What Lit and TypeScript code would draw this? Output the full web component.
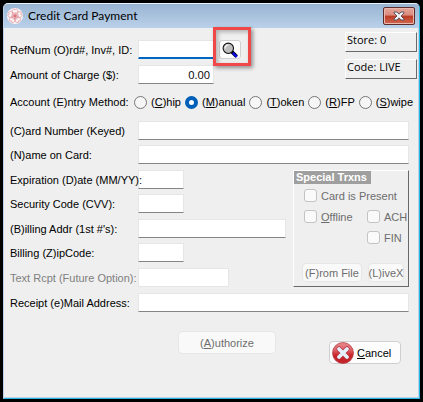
import { LitElement, html, css, svg } from "lit";
import { customElement, state } from "lit/decorators.js";

interface Method {
  id: string;
  key: string;
  rest: string;
}

const METHODS: Method[] = [
  { id: "chip", key: "C", rest: "hip" },
  { id: "manual", key: "M", rest: "anual" },
  { id: "token", key: "T", rest: "oken" },
  { id: "rfp", key: "R", rest: "FP" },
  { id: "swipe", key: "S", rest: "wipe" },
];

const blossom = html`<svg class="logo" viewBox="0 0 16 16" aria-hidden="true">
  <circle cx="8" cy="8" r="8" fill="#fbf3f4" />
  <g fill="none" stroke="#de8f96" stroke-width="0.6">
    ${[0, 72, 144, 216, 288].map(
      (a) => svg`<g transform="rotate(${a} 8 8)">
        <path d="M8 8C4.2 5.8 4.4 1.8 6.8 0.8L8 2L9.2 0.8C11.6 1.8 11.8 5.8 8 8Z" />
        <path d="M8 8V4M8 8L6.6 4.4M8 8L9.4 4.4" />
      </g>`
    )}
  </g>
  <circle cx="8" cy="8" r="0.8" fill="#d8525c" />
</svg>`;

const closeMark = html`<svg class="close-mark" viewBox="0 0 12 10" aria-hidden="true">
  <path
    d="M1 1H4L6 3.2L8 1H11V2L8 5L11 8V9H8L6 6.8L4 9H1V8L4 5L1 2Z"
    fill="#f4f4f6"
    stroke="#5b5560"
    stroke-width="1"
  />
</svg>`;

const magnifier = html`<svg class="magnifier" viewBox="0 0 16 16" aria-hidden="true">
  <path d="M9.6 9.6L14.6 14.6" stroke="#000" stroke-width="3.6" />
  <path d="M10.8 10.8L14.8 14.8" stroke="#0a0ae0" stroke-width="2.6" />
  <circle cx="6.3" cy="6.3" r="5.2" fill="#bdbdbd" stroke="#111" stroke-width="1.1" />
  <path d="M3 6.4A3.4 3.4 0 0 1 6.4 3" fill="none" stroke="#eee" stroke-width="1.3" />
</svg>`;

const cancelMark = html`<svg class="cancel-mark" viewBox="0 0 22 22" aria-hidden="true">
  <defs>
    <linearGradient id="red" x1="0" y1="0" x2="0" y2="1">
      <stop offset="0" stop-color="#e88a8e" />
      <stop offset="0.4" stop-color="#dc5a60" />
      <stop offset="0.6" stop-color="#c9242c" />
      <stop offset="1" stop-color="#c4222a" />
    </linearGradient>
  </defs>
  <circle cx="11" cy="11" r="10.5" fill="url(#red)" stroke="#b8484e" stroke-width="0.8" />
  <path d="M7 7L15 15M15 7L7 15" stroke="#b0303a" stroke-width="5" stroke-linecap="round" />
  <path d="M7 7L15 15M15 7L7 15" stroke="#e6f0fc" stroke-width="3.8" stroke-linecap="round" />
</svg>`;

@customElement("app-root")
export class AppRoot extends LitElement {
  @state() private method = "manual";

  static styles = css`
    :host {
      display: block;
      box-sizing: border-box;
      min-height: 100vh;
      padding: 3px;
      background: #000;
      color: #000;
      font: 11px/16px "Liberation Sans", Arial, sans-serif;
    }
    * {
      box-sizing: border-box;
    }
    .window {
      display: flex;
      flex-direction: column;
      min-height: calc(100vh - 6px);
      border: 1px solid #29b6dc;
      border-left-color: #b9d1ea;
      border-top-color: #e8f0f8;
      border-radius: 5px 5px 0 0;
      background: #efefef;
      overflow: hidden;
    }
    .titlebar {
      display: flex;
      align-items: center;
      gap: 5px;
      height: 24px;
      padding: 0 4px 0 3px;
      background: linear-gradient(#98b4d2, #bad1ea);
    }
    .logo {
      width: 16px;
      height: 16px;
    }
    .title {
      flex: 1;
      margin: 0;
      font: 12px/16px Lato, sans-serif;
    }
    .close {
      display: flex;
      align-items: center;
      justify-content: center;
      width: 32px;
      height: 18px;
      padding: 0;
      border: 1px solid #5e2b2b;
      border-radius: 2px;
      background: linear-gradient(#e6a79b, #d98a7c 45%, #bb3a24 50%, #d0674f);
      box-shadow: inset 0 0 0 1px #e9b9b0;
    }
    .close-mark {
      width: 12px;
      height: 10px;
    }
    .body {
      flex: 1;
      padding: 4px 1px 16px 6px;
      border-right: 1px solid #b9d1ea;
      border-bottom: 1px solid #b9d1ea;
    }
    .top,
    .pair {
      display: flex;
      flex-direction: column;
      gap: 5px;
    }
    .head {
      display: flex;
      justify-content: space-between;
    }
    .top {
      gap: 6px;
      padding-top: 8px;
    }
    .row {
      display: grid;
      grid-template-columns: 128px 1fr;
      align-items: center;
      height: 19px;
      white-space: nowrap;
    }
    .row label {
      z-index: 1;
    }
    .row.off {
      color: #808080;
    }
    .field {
      width: 100%;
      height: 19px;
      padding: 0 4px;
      border: 1px solid #e6e6e6;
      border-bottom-color: #858585;
      border-radius: 0;
      background: #fff;
      font: inherit;
      outline: none;
    }
    .field:disabled {
      border-color: #e6e6e6;
    }
    .active {
      border-bottom: 2px solid #0067c0;
    }
    .amount {
      padding: 0 3px;
      text-align: right;
      font: 11px/16px "Open Sans", sans-serif;
    }
    .w-short {
      width: 46px;
    }
    .w-ref {
      width: 76px;
    }
    .w-text {
      width: 91px;
    }
    .w-addr {
      width: 148px;
    }
    .lookup {
      display: flex;
      align-items: center;
      gap: 5px;
    }
    .find-box {
      position: relative;
    }
    .find-box::after {
      content: "";
      position: absolute;
      inset: -13px -10px -7px -6px;
      border: 3px solid #f04848;
      box-shadow: 2px 2px 4px #0006, inset 2px 2px 4px #0004;
      pointer-events: none;
    }
    .find {
      display: flex;
      align-items: center;
      justify-content: center;
      width: 22px;
      height: 19px;
      padding: 0;
      border: 1px solid #d0d0d0;
      border-radius: 3px;
      background: #fdfdfd;
    }
    .magnifier {
      width: 16px;
      height: 16px;
    }
    .tags {
      display: flex;
      flex-direction: column;
      gap: 7px;
      width: 72px;
    }
    .tag {
      height: 20px;
      padding: 0 1px;
      border: 1px solid #fff;
      border-right-color: #696969;
      border-bottom-color: #696969;
      font: 11px/14px "Open Sans", sans-serif;
    }
    .methods {
      display: flex;
      align-items: center;
      gap: 4px;
      margin: 9px 0 10px;
      height: 18px;
      white-space: nowrap;
    }
    .caption {
      width: 120px;
    }
    .choice {
      display: flex;
      align-items: center;
      gap: 4px;
    }
    input[type="radio"],
    input[type="checkbox"] {
      appearance: none;
      flex: none;
      width: 13px;
      height: 13px;
      margin: 0;
      border: 1px solid #767676;
      border-radius: 50%;
      background: #f6f6f6;
    }
    input[type="radio"]:checked {
      border: 4px solid #005fb8;
      background: #fff;
    }
    input[type="checkbox"] {
      border-color: #c3c3c3;
      border-radius: 3px;
      background: #fafafa;
    }
    .form {
      display: flex;
      flex-direction: column;
      gap: 6px;
      padding-right: 8px;
    }
    .middle {
      display: flex;
      justify-content: space-between;
    }
    .left {
      display: flex;
      flex-direction: column;
      gap: 6px;
    }
    .special {
      display: flex;
      flex-direction: column;
      width: 116px;
      border: 1px solid #fff;
      border-right-color: #696969;
      border-bottom-color: #696969;
      color: #6d6d6d;
    }
    .special-title {
      align-self: flex-start;
      margin: 0;
      padding: 0 4px 0 2px;
      background: #9f9f9f;
      color: #fff;
      font: bold 11px/13px "Liberation Sans", Arial, sans-serif;
    }
    .checks {
      display: grid;
      grid-template-columns: 63px 1fr;
      grid-auto-rows: 21px;
      align-items: center;
      align-content: start;
      flex: 1;
      padding: 1px 0 0 10px;
      white-space: nowrap;
    }
    .wide {
      grid-column: 1 / -1;
    }
    .second {
      grid-column: 2;
    }
    .buttons {
      display: flex;
      justify-content: space-between;
      padding: 0 4px 4px 8px;
    }
    .btn {
      display: flex;
      align-items: center;
      justify-content: center;
      height: 19px;
      padding: 0;
      border: 1px solid #e6e6e6;
      border-radius: 4px;
      background: #f9f9f9;
      color: #6d6d6d;
      font: inherit;
      white-space: nowrap;
    }
    .from-file {
      width: 60px;
    }
    .live {
      width: 36px;
    }
    .actions {
      display: flex;
      align-items: flex-start;
      justify-content: flex-end;
      gap: 53px;
      margin-top: 19px;
      padding-right: 16px;
    }
    .authorize {
      width: 98px;
      height: 23px;
    }
    .cancel {
      justify-content: flex-start;
      gap: 3px;
      width: 72px;
      height: 23px;
      margin-top: 10px;
      padding: 0 2px;
      border-color: #cfcfcf;
      background: #fdfdfd;
      color: #000;
    }
    .cancel-mark {
      width: 22px;
      height: 22px;
      flex: none;
    }
  `;

  private row(id: string, label: string, width = "", disabled = false) {
    return html`<div class="row ${disabled ? "off" : ""}">
      <label for=${id}>${label}</label>
      <input id=${id} class="field ${width}" type="text" ?disabled=${disabled} />
    </div>`;
  }

  render() {
    return html`<main class="window">
      <header class="titlebar">
        ${blossom}
        <h1 class="title">Credit Card Payment</h1>
        <button class="close" type="button" aria-label="Close">${closeMark}</button>
      </header>
      <form class="body">
        <div class="head">
          <div class="top">
            <div class="row">
              <label for="ref">RefNum (O)rd#, Inv#, ID:</label>
              <div class="lookup">
                <input id="ref" class="field active w-ref" type="text" />
                <span class="find-box">
                  <button class="find" type="button" aria-label="Find">${magnifier}</button>
                </span>
              </div>
            </div>
            <div class="row">
              <label for="amount">Amount of Charge ($):</label>
              <input id="amount" class="field amount w-ref" type="text" value="0.00" />
            </div>
          </div>
          <div class="tags">
            <div class="tag">Store: 0</div>
            <div class="tag">Code: LIVE</div>
          </div>
        </div>
        <div class="methods" role="radiogroup" aria-labelledby="method-caption">
          <span class="caption" id="method-caption">Account (E)ntry Method:</span>
          ${METHODS.map(
            (m) => html`<label class="choice">
              <input
                type="radio"
                name="method"
                .checked=${this.method === m.id}
                @change=${() => (this.method = m.id)}
              />
              <span>(<u>${m.key}</u>)${m.rest}</span>
            </label>`
          )}
        </div>
        <div class="form">
          <div class="pair">
            ${this.row("card", "(C)ard Number (Keyed)")} ${this.row("name", "(N)ame on Card:")}
          </div>
          <div class="middle">
            <div class="left">
              <div class="pair">
                ${this.row("exp", "Expiration (D)ate (MM/YY):", "w-short")}
                ${this.row("cvv", "Security Code (CVV):", "w-short")}
              </div>
              <div class="pair">
                ${this.row("addr", "(B)illing Addr (1st #'s):", "w-addr")}
                ${this.row("zip", "Billing (Z)ipCode:", "w-short")}
              </div>
              ${this.row("text", "Text Rcpt (Future Option):", "w-text", true)}
            </div>
            <section class="special">
              <h2 class="special-title">Special Trxns</h2>
              <div class="checks">
                <label class="choice wide"><input type="checkbox" disabled />Card is Present</label>
                <label class="choice"><input type="checkbox" disabled /><span><u>O</u>ffline</span></label>
                <label class="choice"><input type="checkbox" disabled />ACH</label>
                <label class="choice second"><input type="checkbox" disabled />FIN</label>
              </div>
              <div class="buttons">
                <button class="btn from-file" type="button" disabled>(F)rom File</button>
                <button class="btn live" type="button" disabled>(L)iveX</button>
              </div>
            </section>
          </div>
          ${this.row("mail", "Receipt (e)Mail Address:")}
        </div>
        <div class="actions">
          <button class="btn authorize" type="button" disabled><span>(<u>A</u>)uthorize</span></button>
          <button class="btn cancel" type="button">${cancelMark}<span><u>C</u>ancel</span></button>
        </div>
      </form>
    </main>`;
  }
}
